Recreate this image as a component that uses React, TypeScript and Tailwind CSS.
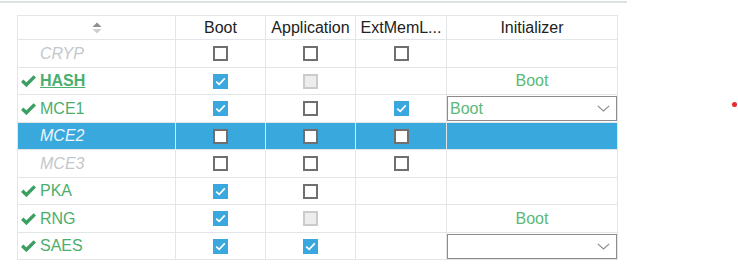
import React from "react";

type Box = "on" | "off" | "dis" | null;

interface Row {
  name: string;
  ok: boolean;
  style: "dim" | "bold" | "normal" | "sel";
  boot: Box;
  app: Box;
  ext: Box;
  init: "text" | "select" | "selectEmpty" | null;
  h: string;
}

const rows: Row[] = [
  { name: "CRYP", ok: false, style: "dim", boot: "off", app: "off", ext: "off", init: null, h: "h-[28px]" },
  { name: "HASH", ok: true, style: "bold", boot: "on", app: "dis", ext: null, init: "text", h: "h-[27px]" },
  { name: "MCE1", ok: true, style: "normal", boot: "on", app: "off", ext: "on", init: "select", h: "h-[28px]" },
  { name: "MCE2", ok: false, style: "sel", boot: "off", app: "off", ext: "off", init: null, h: "h-[27px]" },
  { name: "MCE3", ok: false, style: "dim", boot: "off", app: "off", ext: "off", init: null, h: "h-[28px]" },
  { name: "PKA", ok: true, style: "normal", boot: "on", app: "off", ext: null, init: null, h: "h-[27px]" },
  { name: "RNG", ok: true, style: "normal", boot: "on", app: "dis", ext: null, init: "text", h: "h-[28px]" },
  { name: "SAES", ok: true, style: "normal", boot: "on", app: "on", ext: null, init: "selectEmpty", h: "h-[27px]" },
];

function CheckBox({ kind }: { kind: Box }) {
  if (!kind) return null;
  if (kind === "on") {
    return (
      <div className="w-[15px] h-[15px] bg-[#3ba7df] flex items-center justify-center">
        <svg width="11" height="9" viewBox="0 0 11 9">
          <path d="M1.2 4.6 L4.2 7.4 L9.8 1.4" stroke="white" strokeWidth="1.7" fill="none" />
        </svg>
      </div>
    );
  }
  if (kind === "dis") {
    return <div className="w-[15px] h-[15px] bg-[#ededed] border-2 border-[#cbcbcb]" />;
  }
  return <div className="w-[15px] h-[15px] bg-white border-2 border-[#6f6f6f]" />;
}

function OkIcon() {
  return (
    <svg width="15" height="12" viewBox="0 0 15 12">
      <path d="M1.2 5.8 L5.4 9.8 L13.8 1.4" stroke="#3c9f62" strokeWidth="3.4" fill="none" />
    </svg>
  );
}

function Chevron() {
  return (
    <svg width="13" height="7" viewBox="0 0 13 7">
      <path d="M0.8 0.8 L6.5 6 L12.2 0.8" stroke="#8a8a8a" strokeWidth="1.1" fill="none" />
    </svg>
  );
}

const cell = "border-r border-b border-[#e3e6e8] flex items-center justify-center";

export default function App() {
  return (
    <div
      className="relative w-[738px] h-[271px] bg-white overflow-hidden"
      style={{ fontFamily: '"Liberation Sans", Arial, sans-serif' }}
    >
      <div className="mt-[1px] h-[2px] w-[627px] bg-[#dde2e3]" />

      {/* Grid */}
      <div className="ml-[17px] mt-[12px] w-[601px] border-l border-t border-[#e3e6e8] grid grid-cols-[158px_90px_90px_91px_171px] text-[16px]">
        {/* Header */}
        <div className={`${cell} h-[24px]`}>
          <svg width="12" height="14" viewBox="0 0 12 14">
            <path d="M1.5 6 L6 1.5 L10.5 6 Z" fill="#8e8e8e" />
            <path d="M1.5 8 L6 12.5 L10.5 8 Z" fill="#cfcfcf" />
          </svg>
        </div>
        <div className={`${cell} h-[24px] text-[#222]`}>Boot</div>
        <div className={`${cell} h-[24px] text-[#222]`}>Application</div>
        <div className={`${cell} h-[24px] text-[#222]`}>ExtMemL...</div>
        <div className={`${cell} h-[24px] text-[#222]`}>Initializer</div>

        {rows.map((r) => {
          const sel = r.style === "sel";
          const bg = sel ? "bg-[#39a8dc]" : "";
          const nameCls =
            r.style === "dim"
              ? "italic text-[#c3c7cb]"
              : r.style === "sel"
              ? "italic text-[#eef7fc]"
              : r.style === "bold"
              ? "font-bold underline text-[#4cae6c]"
              : "text-[#4cae6c]";
          return (
            <React.Fragment key={r.name}>
              <div className={`border-r border-b border-[#e3e6e8] flex items-center ${r.h} ${bg}`}>
                <div className="w-[15px] ml-[3px] mr-[4px] flex items-center">{r.ok && <OkIcon />}</div>
                <span className={nameCls}>{r.name}</span>
              </div>
              <div className={`${cell} ${r.h} ${bg}`}>
                <CheckBox kind={r.boot} />
              </div>
              <div className={`${cell} ${r.h} ${bg}`}>
                <CheckBox kind={r.app} />
              </div>
              <div className={`${cell} ${r.h} ${bg}`}>
                <CheckBox kind={r.ext} />
              </div>
              <div className={`border-r border-b border-[#e3e6e8] flex items-center justify-center relative ${r.h} ${bg}`}>
                {r.init === "text" && <span className="text-[#5bb877]">Boot</span>}
                {(r.init === "select" || r.init === "selectEmpty") && (
                  <div className="absolute left-0 top-[1px] w-[170px] h-[25px] border border-[#8c8c8c] bg-white flex items-center justify-between pl-[2px] pr-[6px]">
                    <span className="text-[#5bb877]">{r.init === "select" ? "Boot" : ""}</span>
                    <Chevron />
                  </div>
                )}
              </div>
            </React.Fragment>
          );
        })}
      </div>

      <div className="absolute left-[732px] top-[102px] w-[5px] h-[5px] rounded-full bg-[#e82a2a]" />
    </div>
  );
}
